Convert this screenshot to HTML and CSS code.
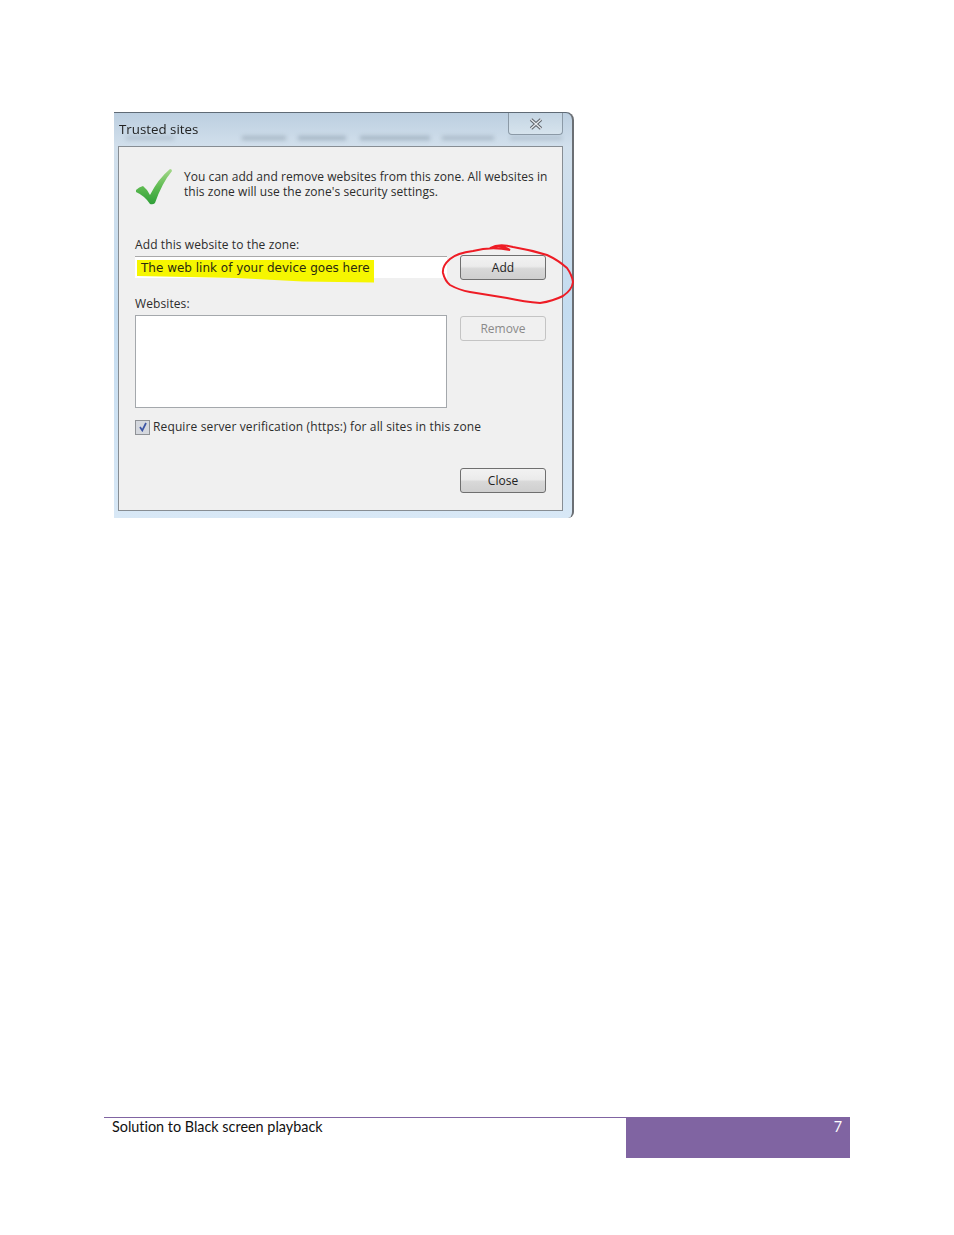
FILE: index.html
```html
<!DOCTYPE html>
<html lang="en">
<head>
    <meta charset="UTF-8">
    <title>Solution to Black screen playback</title>
    <link rel="stylesheet" href="styles.css">
</head>
<body>
    <div class="page">
        <div class="dialog">
            <div class="titlebar">
                <span class="title">Trusted sites</span>
                <div class="ghost-tabs">
                    <i class="g1"></i><i class="g2"></i><i class="g3"></i><i class="g4"></i><i class="g5"></i><i class="g6"></i>
                </div>
                <div class="close-x">
                    <svg width="14" height="12" viewBox="0 0 14 12">
                        <path d="M2 1.5 L12 10.5 M12 1.5 L2 10.5" stroke="#5f646b" stroke-width="3.4" fill="none"/>
                        <path d="M2 1.5 L12 10.5 M12 1.5 L2 10.5" stroke="#e8ecf0" stroke-width="1.3" fill="none"/>
                    </svg>
                </div>
            </div>
            <div class="panel">
                <div class="intro">
                    <svg class="check" width="38" height="38" viewBox="0 0 38 38">
                        <defs>
                            <linearGradient id="chk" x1="0" y1="0" x2="0" y2="1">
                                <stop offset="0" stop-color="#a5d88a"/>
                                <stop offset="0.5" stop-color="#5fbb52"/>
                                <stop offset="1" stop-color="#2f9f38"/>
                            </linearGradient>
                        </defs>
                        <path d="M1 22 Q4 19 8 18 Q12 21 15 27 Q23 11 35 1 Q37 1 37 3 Q27 15 20 35 Q18 37 15 36 Q10 28 1 24 Z" fill="url(#chk)"/>
                    </svg>
                    <p class="intro-text">You can add and remove websites from this zone. All websites in<br>this zone will use the zone's security settings.</p>
                </div>
                <div class="label add-label">Add this website to the zone:</div>
                <div class="row">
                    <div class="url-field"><span class="mark"></span><span class="url-text">The web link of your device goes here</span></div>
                    <button class="btn add-btn">Add</button>
                </div>
                <div class="label sites-label">Websites:</div>
                <div class="row top">
                    <div class="sites-list"></div>
                    <button class="btn remove-btn">Remove</button>
                </div>
                <label class="require">
                    <span class="checkbox">
                        <svg width="10" height="10" viewBox="0 0 10 10"><path d="M2 5 L4.3 8.5 L8 1" stroke="#3c55a5" stroke-width="1.7" fill="none"/></svg>
                    </span>
                    Require server verification (https:) for all sites in this zone
                </label>
                <div class="bottom-row">
                    <button class="btn">Close</button>
                </div>
            </div>
            <svg class="scribble" width="140" height="70" viewBox="0 0 140 70">
                <path d="M49 5 Q60 1 69 7 Q50 3 32 8 Q16 10 9 16 Q1 23 2 30 Q4 38 9 42 Q18 47 29 49 Q48 52 66 55 Q84 59 99 60 Q112 58 122 53 Q131 47 132 39 Q131 32 126 25 Q117 17 106 12 Q90 7 72 4 Q58 0 49 5" fill="none" stroke="#ee1c25" stroke-width="2"/>
            </svg>
        </div>
        <div class="footer">
            <div class="footer-title">Solution to Black screen playback</div>
            <div class="footer-page">7</div>
        </div>
    </div>
</body>
</html>
```

FILE: styles.css
```css
html, body {
    margin: 0;
    background: #fff;
}
.page {
    height: 1235px;
    box-sizing: border-box;
    padding-top: 112px;
    padding-bottom: 77px;
    display: flex;
    flex-direction: column;
    justify-content: space-between;
    overflow: hidden;
}
.dialog {
    position: relative;
    width: 460px;
    height: 406px;
    margin-left: 114px;
    box-sizing: border-box;
    padding: 0 9px 7px 4px;
    display: flex;
    flex-direction: column;
    background: linear-gradient(to bottom, #bccfe0 0, #d2e0ec 34px, #c4dcf0 200px, #d8e8f6 100%);
    border-top: 1px solid #5f6a75;
    border-right: 2px solid #6b6f74;
    border-radius: 0 8px 6px 0;
    font-family: "Open Sans", sans-serif;
    font-size: 12px;
    color: #2c2c2c;
    filter: blur(0.35px);
}
.titlebar {
    position: relative;
    height: 33px;
    flex: none;
    display: flex;
    justify-content: space-between;
}
.title {
    font-size: 13.3px;
    line-height: 32px;
    margin-left: 1px;
    color: #222;
}
.ghost-tabs {
    position: absolute;
    left: 8px;
    top: 23px;
    width: 446px;
    height: 5px;
    display: flex;
    filter: blur(2px);
}
.ghost-tabs i {
    display: block;
    height: 4px;
    background: #8697a6;
}
.g1 { width: 48px; margin-right: 68px; opacity: .35; }
.g2 { width: 44px; margin-right: 12px; opacity: .55; }
.g3 { width: 48px; margin-right: 14px; opacity: .6; }
.g4 { width: 70px; margin-right: 12px; opacity: .6; }
.g5 { width: 52px; margin-right: 16px; opacity: .5; }
.g6 { width: 52px; opacity: .35; }
.close-x {
    position: relative;
    width: 53px;
    height: 21px;
    border: 1px solid #8b99a6;
    border-top: none;
    border-radius: 0 0 4px 4px;
    display: flex;
    align-items: center;
    justify-content: center;
    background: linear-gradient(to bottom, #c4d5e3, #d6e3ed);
}
.panel {
    flex: 1;
    box-sizing: border-box;
    border: 1px solid #878d93;
    background: #f0f0f0;
    padding: 21px 16px 17px 16px;
    display: flex;
    flex-direction: column;
}
.intro {
    display: flex;
    height: 38px;
}
.check {
    flex: none;
}
.intro-text {
    margin: 1px 0 0 11px;
    line-height: 15px;
    white-space: nowrap;
    letter-spacing: 0.05px;
}
.label {
    line-height: 16px;
    letter-spacing: 0.1px;
}
.add-label {
    margin-top: 31px;
}
.sites-label {
    margin-top: 16px;
}
.row {
    display: flex;
    justify-content: space-between;
    align-items: center;
    margin-top: 2px;
}
.row.top {
    align-items: flex-start;
    margin-top: 3px;
}
.url-field {
    position: relative;
    width: 312px;
    height: 22px;
    margin-bottom: 2px;
    box-sizing: border-box;
    background: #fff;
    border-top: 1px solid #a9a9a9;
    display: flex;
    align-items: center;
}
.mark {
    position: absolute;
    left: 2px;
    top: 3px;
    width: 237px;
    height: 23px;
    background: #f6f600;
    clip-path: polygon(0 0, 100% 0, 100% 100%, 70% 96%, 42% 80%, 0 72%);
}
.url-text {
    position: relative;
    margin: 2px 0 0 6px;
    font-family: "DejaVu Sans", sans-serif;
    font-size: 12px;
    color: #2a2a10;
}
.btn {
    width: 86px;
    height: 25px;
    padding: 0;
    box-sizing: border-box;
    border: 1px solid #6f6f6f;
    border-radius: 3px;
    background: linear-gradient(to bottom, #f2f2f2 0, #ebebeb 45%, #d8d8d8 55%, #cfcfcf 100%);
    font-family: inherit;
    font-size: 12px;
    color: #222;
}
.remove-btn {
    margin-top: 1px;
    background: #f0f0f0;
    border-color: #c4c4c4;
    color: #8a8a8a;
}
.sites-list {
    width: 312px;
    height: 93px;
    box-sizing: border-box;
    border: 1px solid #a4a8ac;
    background: #fff;
}
.require {
    display: flex;
    align-items: center;
    gap: 3px;
    margin-top: 11px;
    line-height: 16px;
    letter-spacing: 0.13px;
    white-space: nowrap;
}
.checkbox {
    width: 15px;
    height: 15px;
    box-sizing: border-box;
    border: 1px solid #8f9296;
    background: #d5d8de;
    display: flex;
    align-items: center;
    justify-content: center;
}
.bottom-row {
    margin-top: auto;
    display: flex;
    justify-content: flex-end;
}
.scribble {
    position: absolute;
    left: 327px;
    top: 130px;
}
.footer {
    display: flex;
    margin-left: 104px;
    width: 746px;
    height: 41px;
    flex: none;
    font-family: Lato, sans-serif;
    font-size: 14.4px;
    font-variant-ligatures: none;
}
.footer-title {
    width: 522px;
    box-sizing: border-box;
    padding-left: 8px;
    border-top: 1px solid #8064a2;
    line-height: 17px;
    color: #111;
}
.footer-page {
    flex: 1;
    background: #8064a2;
    color: #fff;
    text-align: right;
    padding-right: 8px;
    line-height: 20px;
}
```
